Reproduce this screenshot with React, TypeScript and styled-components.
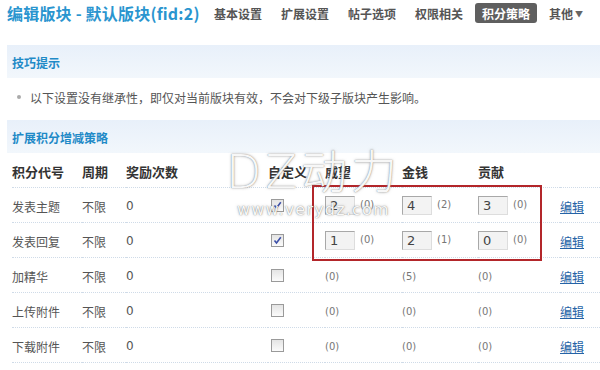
import React from "react";
import styled, { createGlobalStyle } from "styled-components";

const GlobalStyle = createGlobalStyle`
  html, body {
    margin: 0;
    padding: 0;
    background: #fff;
  }
  body {
    font-family: "Noto Sans CJK SC", "Noto Sans", sans-serif;
    font-size: 12px;
    color: #333;
  }
`;

const Page = styled.div`
  position: relative;
  width: 600px;
  height: 370px;
  overflow: hidden;
  background: #fff;
`;

const TopBar = styled.div`
  display: flex;
  align-items: center;
  height: 26px;
  padding: 0 0 0 7px;
`;

const Title = styled.h1`
  margin: 0;
  font-size: 16px;
  font-weight: bold;
  color: #2a95cf;
  width: 200px;
  white-space: nowrap;
  letter-spacing: 0.2px;
`;

const Nav = styled.div`
  display: flex;
  align-items: center;
  gap: 5px;
`;

const NavItem = styled.span<{ $active?: boolean }>`
  display: inline-flex;
  align-items: center;
  height: 20px;
  padding: 0 7px;
  border-radius: 3px;
  font-size: 12px;
  font-weight: bold;
  white-space: nowrap;
  color: ${(p) => (p.$active ? "#fff" : "#555")};
  background: ${(p) => (p.$active ? "#5f5f5f" : "transparent")};
`;

const Arrow = styled.span`
  font-size: 8px;
  margin-left: 2px;
  color: #666;
`;

const Content = styled.div`
  margin: 19px 0 0 7px;
`;

const SectionHead = styled.div`
  display: flex;
  align-items: center;
  box-sizing: border-box;
  height: 33px;
  padding: 1px 0 0 5px;
  background: linear-gradient(#e8f0fa, #f2f7fc);
  font-size: 12px;
  font-weight: bold;
  color: #1f8ac7;
`;

const Tip = styled.div`
  display: flex;
  align-items: center;
  box-sizing: border-box;
  height: 42px;
  padding: 0 0 4px 10px;
  color: #555;
  font-size: 12px;
`;

const Bullet = styled.span`
  display: inline-block;
  width: 4px;
  height: 4px;
  border-radius: 50%;
  background: #aaa;
  margin-right: 9px;
`;

const Grid = styled.div`
  display: grid;
  grid-template-columns: 70px 44px 142px 57px 77px 76px 82px 1fr;
  padding-left: 5px;
`;

const Cell = styled.div<{ $head?: boolean }>`
  display: flex;
  align-items: center;
  box-sizing: border-box;
  height: 35px;
  padding-top: 2px;
  border-bottom: 1px dotted #cfdbe8;
  font-size: ${(p) => (p.$head ? "13px" : "12px")};
  font-weight: ${(p) => (p.$head ? "bold" : "normal")};
  color: ${(p) => (p.$head ? "#333" : "#555")};
  white-space: nowrap;
`;

const Num = styled.span`
  font-family: "DejaVu Sans", sans-serif;
  font-size: 12px;
  color: #555;
`;

const Check = styled.span`
  display: inline-flex;
  align-items: center;
  justify-content: center;
  width: 11px;
  height: 11px;
  margin: -2px 0 0 3px;
  border: 1px solid #9a9a9a;
  background: linear-gradient(#e4e4e4, #fbfbfb);
`;

const Input = styled.span`
  display: inline-flex;
  align-items: center;
  box-sizing: border-box;
  width: 30px;
  height: 19px;
  margin-top: -2px;
  padding-left: 4px;
  border: 1px solid #a8a8a8;
  border-right-color: #ddd;
  border-bottom-color: #ddd;
  background: #f3f3f3;
  font-family: "DejaVu Sans", sans-serif;
  font-size: 13px;
  color: #444;
`;

const Extra = styled.span<{ $spaced?: boolean }>`
  font-family: "DejaVu Sans", sans-serif;
  font-size: 10px;
  color: #777;
  margin-left: ${(p) => (p.$spaced ? "5px" : "0")};
  margin-top: ${(p) => (p.$spaced ? "-3px" : "0")};
`;

const EditLink = styled.a`
  color: #2563a6;
  text-decoration: underline;
  font-size: 12px;
`;

const RedBox = styled.div`
  position: absolute;
  left: 312px;
  top: 185px;
  width: 226px;
  height: 72px;
  border: 2px solid #b3262a;
  pointer-events: none;
`;

const Watermark = styled.div`
  position: absolute;
  left: 226px;
  top: 146px;
  display: flex;
  flex-direction: column;
  align-items: center;
  pointer-events: none;
  color: rgba(255, 255, 255, 0.95);
  text-shadow: 0 0 1px rgba(100, 100, 100, 0.8), 0 0 3px rgba(140, 140, 140, 0.6);
`;

const MarkBig = styled.div`
  font-family: "DejaVu Sans", "Noto Sans CJK SC", sans-serif;
  font-size: 46px;
  font-weight: 300;
  line-height: 52px;
  letter-spacing: 4px;
`;

const MarkSmall = styled.div`
  font-family: "DejaVu Sans", sans-serif;
  font-size: 16px;
  line-height: 18px;
  letter-spacing: 1.2px;
  margin-top: 3px;
`;

const CheckIcon = () => (
  <svg width="9" height="9" viewBox="0 0 9 9">
    <path d="M1.5 4.5 L3.5 7 L7.8 1.2" stroke="#3c4fa8" strokeWidth="1.6" fill="none" />
  </svg>
);

type Row = {
  name: string;
  custom: boolean;
  vals: (number | null)[];
  extras: number[];
};

const rows: Row[] = [
  { name: "发表主题", custom: true, vals: [2, 4, 3], extras: [0, 2, 0] },
  { name: "发表回复", custom: true, vals: [1, 2, 0], extras: [0, 1, 0] },
  { name: "加精华", custom: false, vals: [null, null, null], extras: [0, 5, 0] },
  { name: "上传附件", custom: false, vals: [null, null, null], extras: [0, 0, 0] },
  { name: "下载附件", custom: false, vals: [null, null, null], extras: [0, 0, 0] },
];

const navs = ["基本设置", "扩展设置", "帖子选项", "权限相关", "积分策略"];

export default function App() {
  return (
    <Page>
      <GlobalStyle />
      <TopBar>
        <Title>编辑版块 - 默认版块(fid:2)</Title>
        <Nav>
          {navs.map((n) => (
            <NavItem key={n} $active={n === "积分策略"}>
              {n}
            </NavItem>
          ))}
          <NavItem>
            其他<Arrow>▼</Arrow>
          </NavItem>
        </Nav>
      </TopBar>
      <Content>
        <SectionHead>技巧提示</SectionHead>
        <Tip>
          <Bullet />
          以下设置没有继承性，即仅对当前版块有效，不会对下级子版块产生影响。
        </Tip>
        <SectionHead>扩展积分增减策略</SectionHead>
        <Grid>
          <Cell $head>积分代号</Cell>
          <Cell $head>周期</Cell>
          <Cell $head>奖励次数</Cell>
          <Cell $head>自定义</Cell>
          <Cell $head>威望</Cell>
          <Cell $head>金钱</Cell>
          <Cell $head>贡献</Cell>
          <Cell $head></Cell>
          {rows.map((r) => (
            <React.Fragment key={r.name}>
              <Cell>{r.name}</Cell>
              <Cell>不限</Cell>
              <Cell>
                <Num>0</Num>
              </Cell>
              <Cell>
                <Check>{r.custom && <CheckIcon />}</Check>
              </Cell>
              {r.extras.map((e, i) => (
                <Cell key={i}>
                  {r.custom && <Input>{r.vals[i]}</Input>}
                  <Extra $spaced={r.custom}>({e})</Extra>
                </Cell>
              ))}
              <Cell>
                <EditLink href="#">编辑</EditLink>
              </Cell>
            </React.Fragment>
          ))}
        </Grid>
      </Content>
      <RedBox />
      <Watermark>
        <MarkBig>DZ动力</MarkBig>
        <MarkSmall>www.verydz.com</MarkSmall>
      </Watermark>
    </Page>
  );
}
